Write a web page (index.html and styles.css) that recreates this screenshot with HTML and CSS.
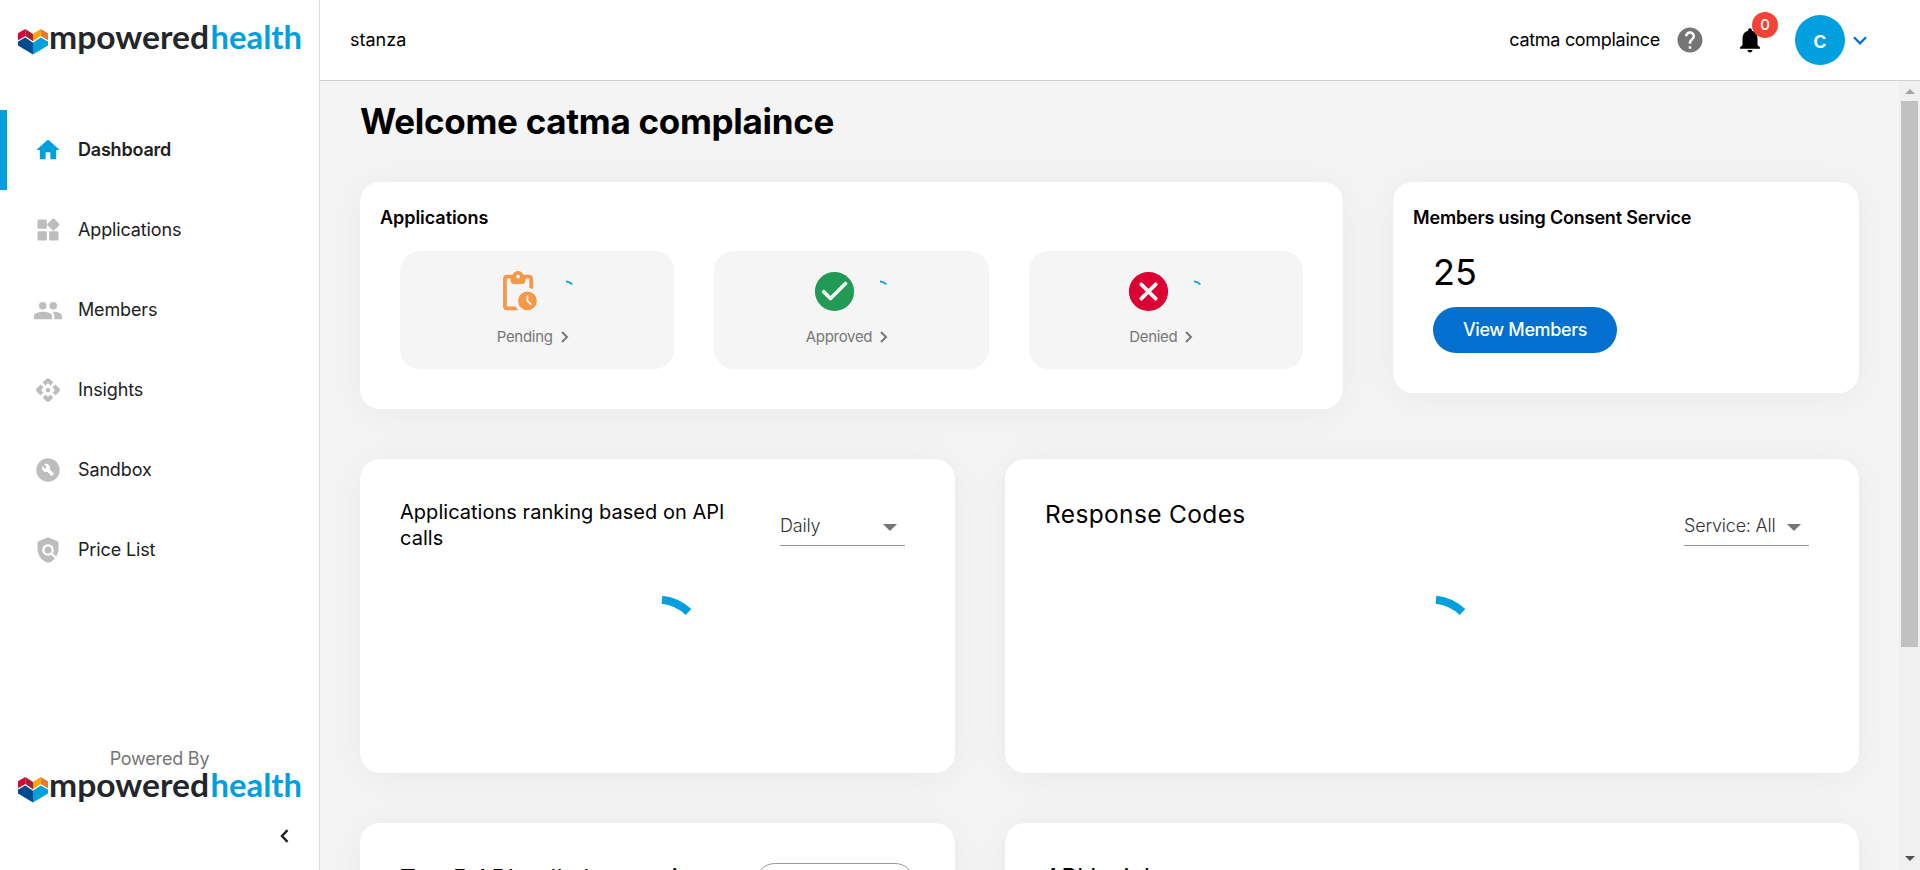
FILE: index.html
```html
<!DOCTYPE html>
<html lang="en">
<head>
<meta charset="utf-8">
<title>mpoweredhealth</title>
<link rel="stylesheet" href="styles.css">
</head>
<body>
<svg class="defs" width="0" height="0">
  <symbol id="logo" viewBox="0 0 284 46">
    <path fill="#d9003a" d="M0 20.300 7.300 16V23.700L0 28z"/>
    <path fill="#a71f35" d="M7.300 16 15 21V29L7.300 23.700z"/>
    <path fill="#ffa400" d="M15 21 22.700 16V23.700L15 29z"/>
    <path fill="#e07c2f" d="M22.700 16 30 20.300V28L22.700 23.700z"/>
    <path fill="#004b8d" d="M0 28 7.300 23.700 15 29V41.500L0 32.500z"/>
    <path fill="#00a0df" d="M30 28 22.700 23.700 15 29V41.500L30 32.500z"/>
    <path fill="none" stroke="#fff" stroke-width="1.200" d="M0 28 7.300 23.700 15 29 22.700 23.700 30 28"/>
    <text class="logo-text" x="31" y="35.700" textLength="160" lengthAdjust="spacingAndGlyphs" fill="#23272b">mpowered</text>
    <text class="logo-text" x="192.500" y="35.700" textLength="91.500" lengthAdjust="spacingAndGlyphs" fill="#00a0df">health</text>
  </symbol>
  <symbol id="next" viewBox="0 0 8 12"><path d="M1 1l5 5-5 5" fill="none" stroke="currentColor" stroke-width="2"/></symbol>
  <symbol id="spin" viewBox="0 0 100 100"><path d="M54 5.700A45 45 0 0 1 80.500 18" fill="none" stroke="#00a0df" stroke-width="8"/></symbol>
</svg>
<div class="app">
  <aside class="sidebar">
    <svg class="logo"><use href="#logo"/></svg>
    <nav class="nav">
      <a class="item active"><svg viewBox="0 0 24 24"><path d="M10 20v-6h4v6h5v-8h3L12 3 2 12h3v8z"/></svg><span>Dashboard</span></a>
      <a class="item"><svg viewBox="0 0 24 24"><path d="M14 13h6q1 0 1 1v6q0 1-1 1h-6q-1 0-1-1v-6q0-1 1-1zM4 21h6q1 0 1-1v-6q0-1-1-1H4q-1 0-1 1v6q0 1 1 1zM3 4v6q0 1 1 1h6q1 0 1-1V4q0-1-1-1H4Q3 3 3 4zM15.950 2.400l-4.240 4.240q-.7.700 0 1.400l4.240 4.240q.7.700 1.400 0l4.240-4.240q.7-.7 0-1.400L17.350 2.400q-.7-.7-1.400 0z"/></svg><span>Applications</span></a>
      <a class="item"><svg viewBox="0 0 24 24"><path d="M16.500 11.500a3.200 3.200 0 1 0 0-6.400 3.200 3.200 0 0 0 0 6.400zM7.500 11.500a3.200 3.200 0 1 0 0-6.400 3.200 3.200 0 0 0 0 6.400zM7.500 13.500C5 13.500 0 14.300 0 17.300V19.500q0 .5.500.5H15q.5 0 .5-.5V17.300C15.500 14.300 10.500 13.500 7.500 13.500zM16.500 13.500l-1.100.1c1.300.9 2.100 2.100 2.100 3.700V20H23.500q.5 0 .5-.5V17.300C24 14.300 19.500 13.500 16.500 13.500z"/></svg><span>Members</span></a>
      <a class="item"><svg viewBox="0 0 24 24"><path d="M14 12c0 1.100-.9 2-2 2s-2-.9-2-2 .9-2 2-2 2 .9 2 2zm-2-6l2.120 2.120 2.500-2.500L13.410 2.410c-.78-.78-2.050-.78-2.830 0L7.380 5.620l2.500 2.500L12 6zm-6 6l2.120-2.120-2.500-2.500-3.210 3.210c-.78.780-.78 2.050 0 2.830l3.210 3.210 2.500-2.500L6 12zm12 0l-2.120 2.120 2.500 2.500 3.210-3.210c.78-.78.780-2.050 0-2.830l-3.210-3.210-2.500 2.500L18 12zm-6 6l-2.120-2.120-2.500 2.500 3.210 3.210c.78.780 2.050.780 2.830 0l3.210-3.210-2.500-2.500L12 18z"/></svg><span>Insights</span></a>
      <a class="item"><svg viewBox="0 0 24 24"><path fill-rule="evenodd" d="M12 2C6.480 2 2 6.480 2 12s4.480 10 10 10 10-4.480 10-10S17.520 2 12 2zm4.900 13.490-1.400 1.400c-.2.200-.51.200-.71 0l-3.410-3.410c-1.220.430-2.640.170-3.620-.81-1.110-1.110-1.300-2.790-.59-4.100l2.350 2.350 1.410-1.410-2.350-2.350c1.320-.71 2.990-.52 4.100.59.980.980 1.240 2.400.81 3.620l3.410 3.410c.19.190.19.510 0 .71z"/></svg><span>Sandbox</span></a>
      <a class="item"><svg viewBox="0 0 24 24"><path d="M21 5l-9-4-9 4v6c0 5.550 3.840 10.740 9 12 2.300-.56 4.330-1.900 5.880-3.710l-3.120-3.120c-1.940 1.290-4.580 1.070-6.290-.64-1.950-1.950-1.950-5.120 0-7.070s5.120-1.950 7.070 0c1.710 1.710 1.920 4.350.64 6.290l2.900 2.900C20.290 15.690 21 13.380 21 11V5z"/><circle cx="12" cy="12" r="3"/></svg><span>Price List</span></a>
    </nav>
    <div class="powered">
      <span>Powered By</span>
      <svg class="logo"><use href="#logo"/></svg>
      <svg class="collapse" viewBox="0 0 9 14"><path d="M7.500 1.200 2 7l5.500 5.800" fill="none" stroke="#222" stroke-width="2.400"/></svg>
    </div>
  </aside>
  <div class="main">
    <header class="topbar">
      <span class="org">stanza</span>
      <span class="user">catma complaince</span>
      <svg class="help" viewBox="0 0 24 24"><path fill="#757575" d="M12 2C6.480 2 2 6.480 2 12s4.480 10 10 10 10-4.480 10-10S17.520 2 12 2zm1 17h-2v-2h2v2zm2.070-7.750l-.9.920C13.450 12.900 13 13.500 13 15h-2v-.5c0-1.100.45-2.100 1.170-2.830l1.240-1.260c.37-.36.590-.86.590-1.410 0-1.100-.9-2-2-2s-2 .9-2 2H8c0-2.210 1.790-4 4-4s4 1.790 4 4c0 .88-.36 1.680-.93 2.250z"/></svg>
      <div class="bell">
        <svg viewBox="0 0 24 24"><path d="M12 22c1.100 0 2-.9 2-2h-4c0 1.100.890 2 2 2zm6-6v-5c0-3.070-1.640-5.640-4.500-6.320V4c0-.83-.67-1.500-1.500-1.500s-1.500.670-1.500 1.500v.680C7.630 5.360 6 7.920 6 11v5l-2 2v1h16v-1l-2-2z"/></svg>
        <span class="badge">0</span>
      </div>
      <div class="avatar">c</div>
      <svg class="drop" viewBox="0 0 14 9"><path d="M1 1.300 7 7.300l6-6" fill="none" stroke="#036fce" stroke-width="2.300"/></svg>
    </header>
    <div class="body">
      <main class="content">
        <h1>Welcome catma complaince</h1>
        <div class="row top">
          <section class="card apps">
            <h2>Applications</h2>
            <div class="stats">
              <div class="stat">
                <div class="figure">
                  <svg class="ico" viewBox="1.300 0 24 24" fill="#f59949"><path d="M17 12a5 5 0 1 0 0 10 5 5 0 0 0 0-10zm1.650 7.350L16.500 17.200V14h1v2.790l1.850 1.850zM18 3h-3.180C14.400 1.840 13.300 1 12 1s-2.400.84-2.820 2H6c-1.100 0-2 .9-2 2v15c0 1.100.9 2 2 2h6.110c-.59-.57-1.070-1.250-1.420-2H6V5h2v1q0 2 2 2h4q2 0 2-2V5h2v5.080c.71.100 1.380.310 2 .6V5c0-1.100-.9-2-2-2zm-6 2a1 1 0 1 1 0-2 1 1 0 0 1 0 2z"/></svg>
                  <svg class="spin-s"><use href="#spin"/></svg>
                </div>
                <div class="label">Pending<svg><use href="#next"/></svg></div>
              </div>
              <div class="stat">
                <div class="figure">
                  <svg class="ico" viewBox="0 0 45 45"><circle cx="22.500" cy="22.500" r="19.600" fill="#229954"/><path d="M11.800 22.800l6.700 6.700L33.500 14.500" fill="none" stroke="#f4f4f4" stroke-width="3.800" stroke-linecap="round" stroke-linejoin="round"/></svg>
                  <svg class="spin-s"><use href="#spin"/></svg>
                </div>
                <div class="label">Approved<svg><use href="#next"/></svg></div>
              </div>
              <div class="stat">
                <div class="figure">
                  <svg class="ico" viewBox="0 0 45 45"><circle cx="22.500" cy="22.500" r="19.600" fill="#dc0032"/><path d="M15.300 15.300l14.400 14.400M29.700 15.300L15.300 29.700" fill="none" stroke="#f4f4f4" stroke-width="3.800" stroke-linecap="round"/></svg>
                  <svg class="spin-s"><use href="#spin"/></svg>
                </div>
                <div class="label">Denied<svg><use href="#next"/></svg></div>
              </div>
            </div>
          </section>
          <section class="card consent">
            <h2>Members using Consent Service</h2>
            <div class="count">25</div>
            <button class="btn">View Members</button>
          </section>
        </div>
        <div class="row grid">
          <section class="card chart">
            <div class="head"><h3 class="small">Applications ranking based on API calls</h3><div class="select">Daily<i></i></div></div>
            <svg class="spin-l"><use href="#spin"/></svg>
          </section>
          <section class="card chart">
            <div class="head"><h3>Response Codes</h3><div class="select">Service: All<i></i></div></div>
            <svg class="spin-l"><use href="#spin"/></svg>
          </section>
          <section class="card chart">
            <div class="head"><h3>Top 5 API calls by service</h3><div class="pill"></div></div>
          </section>
          <section class="card chart">
            <div class="head"><h3 class="compact">API Insights</h3></div>
          </section>
        </div>
      </main>
      <div class="scrollbar"><i class="up"></i><i class="thumb"></i><i class="down"></i></div>
    </div>
  </div>
</div>
</body>
</html>
```
FILE: styles.css
```css
* { box-sizing: border-box; }
body { margin: 0; font-family: Inter, "Liberation Sans", sans-serif; font-size: 18px; color: #000; }
svg { display: block; flex: none; }
h1, h2, h3 { margin: 0; }
.defs { position: absolute; }
.app { display: flex; width: 1920px; height: 870px; overflow: hidden; background: #f4f4f4; }

.sidebar { display: flex; flex-direction: column; flex: none; width: 320px; background: #fff; border-right: 1px solid #dcdcdc; padding-top: 13px; }
.logo { width: 284px; height: 46px; margin-left: 18px; overflow: visible; }
.logo-text { font-family: Lato, sans-serif; font-weight: 700; font-size: 32px; }
.nav { margin-top: 51px; }
.item { display: flex; align-items: center; height: 80px; padding-left: 34px; gap: 16px; color: #212121; letter-spacing: -.14px; }
.item svg { width: 28px; height: 28px; fill: #bdbdbd; }
.item span { padding-bottom: 2px; }
.item.active { border-left: 7px solid #00a0df; padding-left: 27px; font-weight: 600; letter-spacing: -.2px; }
.item.active svg { fill: #00a0df; }
.powered { display: flex; flex-direction: column; margin-top: auto; padding-bottom: 27px; }
.powered span { text-align: center; color: #757575; line-height: 24px; letter-spacing: -.2px; }
.powered .logo { margin-top: -10px; }
.collapse { width: 9px; height: 14px; margin: 22px 0 0 280px; }

.main { display: flex; flex-direction: column; flex: 1; min-width: 0; }
.topbar { display: flex; align-items: center; height: 81px; flex: none; background: #fff; border-bottom: 1px solid #cfcfcf; padding: 0 53px 0 30px; }
.org, .user { padding-bottom: 2px; }
.user { margin-left: auto; letter-spacing: -.3px; }
.help { width: 30px; height: 30px; margin-left: 15px; }
.bell { position: relative; margin-left: 30px; }
.bell svg { width: 30px; height: 30px; }
.badge { position: absolute; left: 17px; top: -13px; width: 26px; height: 26px; border-radius: 50%; background: #f44336; color: #fff; font-size: 15px; font-weight: 500; line-height: 26px; text-align: center; }
.avatar { width: 50px; height: 50px; margin-left: 30px; border-radius: 50%; background: #00a0df; color: #fff; font-size: 24px; font-weight: 500; line-height: 50px; text-align: center; }
.drop { width: 14px; height: 9px; margin-left: 8px; }

.body { display: flex; flex: 1; min-height: 0; }
.content { flex: 1; padding: 0 40px; overflow: hidden; }
h1 { font-size: 35px; font-weight: 700; letter-spacing: -.3px; line-height: 42px; padding-top: 19px; height: 101px; }
.row { margin-bottom: 50px; }
.card { background: #fff; border-radius: 20px; box-shadow: 0 4px 40px rgba(0, 0, 0, .05); }
.top { display: flex; align-items: flex-start; justify-content: space-between; }
h2 { font-size: 18px; font-weight: 600; letter-spacing: -.17px; line-height: 22px; }
.apps { width: 983px; height: 227px; padding: 25px 20px 40px; }
.apps h2 { letter-spacing: -.05px; }
.stats { display: grid; grid-template-columns: repeat(3, 1fr); gap: 40px; margin-top: 22px; padding: 0 20px; }
.stat { height: 118px; border-radius: 20px; background: #f5f5f5; padding-top: 18px; }
.figure { display: flex; justify-content: center; align-items: center; gap: 10px; }
.ico { width: 45px; height: 45px; }
.spin-s { width: 24px; height: 24px; }
.label { display: flex; justify-content: center; align-items: center; gap: 8px; margin-top: 13px; padding-right: 9px; font-size: 15px; letter-spacing: -.3px; line-height: 20px; color: #777; }
.label svg { width: 8px; height: 12px; }
.consent { width: 466px; height: 211px; padding: 25px 20px; }
.count { font-size: 36px; line-height: 44px; margin: 21px 0 0 20px; }
.btn { display: block; width: 184px; height: 46px; margin: 13px 0 0 20px; padding: 0 0 2px; border: 0; border-radius: 23px; background: #036fce; color: #fff; font-family: inherit; font-size: 18px; font-weight: 500; letter-spacing: -.37px; }
.grid { display: grid; grid-template-columns: 595px 854px; gap: 50px; }
.chart { height: 314px; padding: 40px 50px 0 40px; }
.head { display: flex; justify-content: space-between; align-items: flex-start; height: 85px; }
h3 { font-size: 24.5px; font-weight: 400; letter-spacing: .35px; line-height: 31px; white-space: nowrap; }
.small { width: 340px; font-size: 20px; letter-spacing: .03px; line-height: 26px; white-space: normal; }
.compact { font-size: 24px; letter-spacing: 0; line-height: 30px; }
.select { display: flex; justify-content: space-between; align-items: center; width: 125px; height: 47px; padding: 7px 8px 0 0; border-bottom: 1px solid #949494; color: #333; font-weight: 300; letter-spacing: -.2px; white-space: nowrap; }
.select i { border: 7px solid transparent; border-top-color: #757575; border-bottom: 0; margin-top: 3px; }
.spin-l { width: 100px; height: 100px; margin: 10px auto 0; transform: translateX(5px); }
.pill { width: 160px; height: 50px; border: 1px solid #999; border-radius: 20px; margin-right: -10px; }

.scrollbar { position: relative; display: flex; flex-direction: column; align-items: center; width: 21px; background: #f0f0f0; padding: 8px 0 9px; }
.up { border: 5px solid transparent; border-bottom-color: #a3a3a3; border-top: 0; }
.thumb { width: 17px; height: 546px; margin-top: 7px; background: #c1c1c1; }
.down { margin-top: auto; border: 5px solid transparent; border-top-color: #505050; border-bottom: 0; }
```
